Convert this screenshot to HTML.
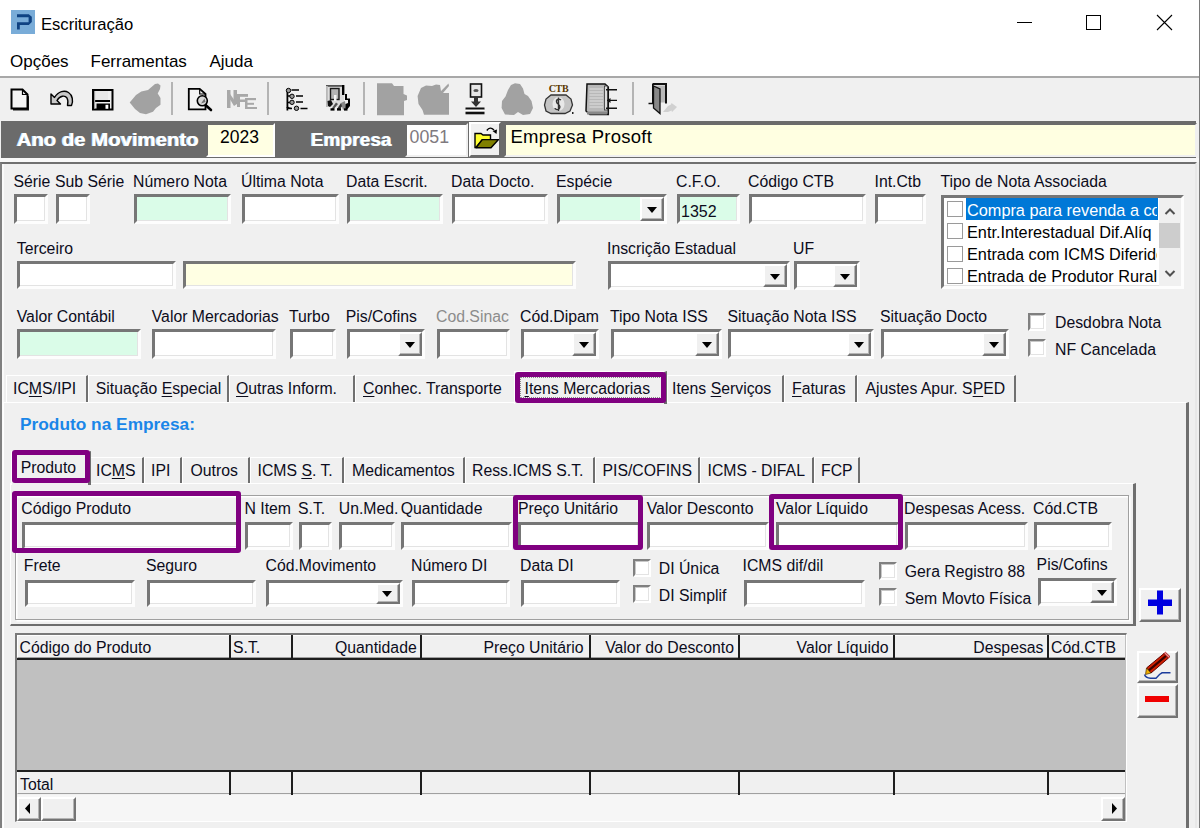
<!DOCTYPE html><html><head><meta charset="utf-8"><style>
*{margin:0;padding:0;box-sizing:border-box}
html,body{width:1200px;height:828px;overflow:hidden;background:#f0f0f0;position:relative;font-family:"Liberation Sans",sans-serif;color:#000}
div{position:absolute}
.l{font-size:15.8px;line-height:15.8px;white-space:pre;color:#0c0c1c}
.bx{border-style:solid;border-width:3px;border-color:#767676 #fdfdfd #fdfdfd #767676;box-shadow:inset -1px -1px 0 #e3e3e3}
.btn{background:#f0f0f0;border-style:solid;border-width:2px;border-color:#fff #747474 #747474 #fff;box-shadow:inset -1px -1px 0 #b4b4b4}
.arr{position:absolute;left:50%;top:50%;margin-left:-5.5px;margin-top:-2px;width:0;height:0;border-left:5.5px solid transparent;border-right:5.5px solid transparent;border-top:6px solid #000}
.pur{border:5px solid #800080;border-radius:3px}
.ck{background:#fff;border-style:solid;border-width:2px;border-color:#808080 #fff #fff #808080;box-shadow:inset -1px -1px 0 #e3e3e3, inset 1px 1px 0 #c8c8c8}
.u{text-decoration:underline;text-underline-offset:2px}
</style></head><body>
<div style="left:0;top:0;width:1200px;height:76px;background:#fff"></div>
<div style="left:0;top:76px;width:1200px;height:1.5px;background:#a8a8a8"></div>
<div style="left:11px;top:10px;width:24px;height:24px;background:#79acd8"></div>
<svg style="position:absolute;left:11px;top:10px" width="24" height="24"><path d="M6 4.3 H17.8 L20.8 6.8 V11.9 L17.8 14.9 H8.8 V19.6 H6 V12.2 H17.6 V7.3 H6 Z" fill="#0f4282"/></svg>
<div style="left:41px;top:16px;font-size:16.6px;line-height:17px;white-space:pre;color:#000">Escrituração</div>
<div style="left:1017px;top:22px;width:15px;height:1.2px;background:#000"></div>
<div style="left:1086px;top:15px;width:15px;height:15px;border:1.2px solid #000"></div>
<svg style="position:absolute;left:1156px;top:14px" width="17" height="17"><path d="M1 1 L16 16 M16 1 L1 16" stroke="#000" stroke-width="1.1"/></svg>
<div style="left:1199px;top:0;width:1px;height:828px;background:#7a7a7a"></div>
<div style="left:10px;top:52.6px;font-size:17px;line-height:17px;white-space:pre;color:#000">Opções</div>
<div style="left:90.5px;top:52.6px;font-size:17px;line-height:17px;white-space:pre;color:#000">Ferramentas</div>
<div style="left:209.5px;top:52.6px;font-size:17px;line-height:17px;white-space:pre;color:#000">Ajuda</div>
<div style="left:171px;top:82px;width:2px;height:33px;background:#b4b4b4"></div>
<div style="left:267px;top:82px;width:2px;height:33px;background:#b4b4b4"></div>
<div style="left:363px;top:82px;width:2px;height:33px;background:#b4b4b4"></div>
<div style="left:631.5px;top:82px;width:2px;height:33px;background:#b4b4b4"></div>
<svg style="position:absolute;left:0;top:0" width="700" height="120" viewBox="0 0 700 120">
<!-- new doc -->
<path d="M13 91 H23 L29 96.5 V110.5 H13 Z" fill="#1a1a1a"/>
<path d="M11.5 89.5 H22.5 L27.5 94.5 V108.5 H11.5 Z" fill="#f4f4f4" stroke="#000" stroke-width="2"/>
<path d="M22.5 89.5 V94.5 H27.5" fill="none" stroke="#000" stroke-width="1.2"/>
<!-- undo -->
<path d="M51 94 L51 104 L60.5 104 L57 100.5 C60 95.5 65 95 67 98 C68.5 100.5 68 103 67.5 105.5 L71.5 105.5 C73.5 101 72.5 95 68.5 92.5 C64.5 90 58.5 91 54.5 97.5 Z" fill="#c8c8c8" stroke="#000" stroke-width="1.4" stroke-linejoin="round"/>
<!-- save -->
<rect x="93" y="90" width="19.5" height="19.5" fill="#f0f0f0" stroke="#000" stroke-width="2"/>
<rect x="96" y="91" width="12" height="9" fill="#e8e8e8"/>
<rect x="95" y="100" width="15" height="2" fill="#000"/>
<rect x="96.5" y="103.5" width="13.5" height="6" fill="#000"/>
<rect x="105.5" y="104.8" width="2.8" height="4" fill="#fff"/>
<rect x="94" y="91" width="1.2" height="17" fill="#9a9a9a"/>
<!-- grey hand -->
<path d="M129.7 102.5 L136 95 L141.3 91.4 L148 90 L155 84 L158 83.5 L160.5 85.5 L160 89 L157.7 93.5 L160.5 98 L160.5 104.8 L156 108 L153 111.8 L146 114.2 L140 113 L135 109 Z" fill="#a2a2a2"/>
<!-- preview doc -->
<path d="M188.8 88.8 H199.7 L205.5 94 V109.3 H188.8 Z" fill="#f4f4f4" stroke="#000" stroke-width="1.8"/>
<path d="M199.7 89 V94 H205.5" fill="none" stroke="#000" stroke-width="1.2"/>
<path d="M205.5 105 L211 110" stroke="#000" stroke-width="2.6" stroke-linecap="round"/>
<circle cx="202.3" cy="100.8" r="5" fill="#d8d8d8" stroke="#000" stroke-width="1.6"/>
<path d="M201 103.5 L204.5 98.5 L205.5 102 Z" fill="#707070"/>
<!-- NFE grey -->
<g fill="#a8a8a8">
<rect x="227" y="90" width="3.5" height="18"/><rect x="233.5" y="90" width="3.5" height="14"/><path d="M228 91 L237 104 L234 106 L228 96 Z"/>
<rect x="237" y="95" width="3" height="12"/><rect x="237" y="94" width="11" height="2.8"/><rect x="237" y="99.5" width="8" height="2.5"/>
<rect x="245" y="98" width="2.5" height="11"/><rect x="245" y="98" width="11" height="2.2"/><rect x="245" y="102.8" width="9" height="2"/><rect x="245" y="107" width="12" height="2"/>
</g>
<!-- tree list -->
<g>
<rect x="286.5" y="89" width="1.8" height="21.5" fill="#000"/>
<path d="M287 96 H290 M287 102.5 H290 M287 107 Q288 108.5 292 108.5" stroke="#000" stroke-width="1.6" fill="none"/>
<circle cx="288.5" cy="90.5" r="2.2" fill="#9a9a9a" stroke="#000" stroke-width="1"/>
<circle cx="292" cy="96.3" r="2.2" fill="#9a9a9a" stroke="#000" stroke-width="1"/>
<circle cx="292" cy="102.3" r="2.2" fill="#9a9a9a" stroke="#000" stroke-width="1"/>
<circle cx="296.5" cy="108.3" r="2.2" fill="#9a9a9a" stroke="#000" stroke-width="1"/>
<path d="M291.5 90 H299 M296 96 H303 M296 102 H303 M300.5 108.5 H307.5" stroke="#000" stroke-width="1.7"/>
</g>
<!-- gear doc -->
<rect x="326" y="85" width="18" height="22" fill="#dcdcdc"/>
<rect x="326" y="85" width="18" height="1.8" fill="#555"/>
<rect x="342" y="85" width="2.4" height="10" fill="#000"/>
<rect x="326" y="86" width="1.8" height="21" fill="#b8b8b8"/>
<rect x="330.5" y="88.5" width="8.5" height="11" fill="#b4b4b4" stroke="#1a1a1a" stroke-width="1.4"/>
<rect x="334" y="95" width="2.5" height="6" fill="#f4f4f4"/>
<path d="M327.5 101 L331 100 L333 104 L330 107 L328 106 Z" fill="#111"/>
<path d="M331 109.5 L336 102.5 L338 104 L333 110 Z" fill="#555"/>
<path d="M337 109 L341 103 L343.5 104 L339.5 110 Z" fill="#333"/>
<path d="M341 103 L345 101 L346 108 L343 110 Z" fill="#888"/>
<rect x="330.5" y="108.3" width="4" height="2.3" fill="#000"/>
<rect x="337" y="108.3" width="4" height="2.3" fill="#000"/>
<rect x="344" y="108.3" width="3.5" height="2.3" fill="#000"/>
<path d="M345 94 H347 V98.5 H350 V106 L347.5 109 H345.5 V104 L348 103 V100 H345 Z" fill="#000"/>
<!-- separators drawn elsewhere -->
<!-- grey doc -->
<path d="M377 83.3 H392 L394 86 H403.5 V94 L407 95.5 V100 L404 101 V115.3 H377 Z" fill="#a2a2a2"/>
<!-- grey apple -->
<path d="M421 88 L426 85.5 L432 86 L436 84.5 L440 85 L441 91 L448.5 83.5 L449 86 L443 93 L449 93 V114.8 H424 L422.5 110 L418.5 104 L417.6 96 Z" fill="#a2a2a2"/>
<!-- download -->
<rect x="470.5" y="84" width="11" height="13" fill="#e6e6e6" stroke="#111" stroke-width="1.6"/>
<ellipse cx="476" cy="90.5" rx="2.6" ry="1.6" fill="#555"/>
<path d="M474 97 H478 V101.5 H481 L476 107 L471 101.5 H474 Z" fill="#333"/>
<rect x="465.5" y="107.5" width="19" height="2.2" fill="#111"/>
<rect x="465.5" y="109.7" width="19" height="2" fill="#fff"/>
<rect x="465.5" y="111.7" width="19" height="2.6" fill="#111"/>
<!-- grey tree -->
<path d="M515 83.3 L520 84 L523 88.5 L524.5 94 L528 96 L531.5 101 L533 108 L530 114 L523 115 L518 112 L514 115 L505 114.5 L501.6 108 L502 101 L505.5 96.5 L508 90 L511 85 Z" fill="#a2a2a2"/>
<!-- CTB bag -->
<text x="558.5" y="91.5" font-family="Liberation Serif" font-weight="bold" font-size="10" fill="#5a3800" text-anchor="middle" letter-spacing="-0.3">CTB</text>
<path d="M551 95 H566 L571 99 L572.5 105 L570 111 L565 113.5 H551 L546 111 L544.5 105 L546 99 Z" fill="#c4c4c4" stroke="#333" stroke-width="1.3"/>
<ellipse cx="558.5" cy="104" rx="6" ry="7" fill="#e8e8e8"/>
<path d="M561 100 C558 98 555.5 100 557 103 C559 105 561.5 106 559 109 C557 110.5 555 109 555 108 M558.5 97.5 V111" fill="none" stroke="#333" stroke-width="1.4"/>
<rect x="572" y="112" width="1.5" height="2" fill="#222"/>
<!-- book -->
<path d="M587 84 H605 L608.3 87 V114.5 H590 L586 111 Z" fill="#b8b8b8" stroke="#111" stroke-width="1.5"/>
<path d="M589.5 89 H603 M589.5 92 H603 M589.5 95 H603 M589.5 98 H603 M589.5 101 H603 M589.5 104 H603 M589.5 107 H603" stroke="#e0e0e0" stroke-width="1"/>
<rect x="604.5" y="86" width="3" height="24" fill="#dcdcdc" stroke="#333" stroke-width="0.8"/>
<path d="M606 89.8 H617 M607 100.4 H617 M606 108.2 H617" stroke="#111" stroke-width="1.4"/>
<path d="M607 100.4 L610.5 98 V103 Z" fill="#111"/>
<rect x="587" y="111.5" width="20" height="3" fill="#888"/>
<!-- door -->
<path d="M652.5 84 H666 V103.5" fill="none" stroke="#111" stroke-width="2"/>
<rect x="652" y="84" width="1.6" height="20" fill="#111"/>
<rect x="654" y="85.5" width="11" height="17" fill="#b8b8b8"/>
<path d="M648.5 103.5 H654" stroke="#111" stroke-width="1.5"/>
<path d="M653.5 86 L660 89 V113.5 L653.5 108 Z" fill="#888" stroke="#111" stroke-width="1.3"/>
<path d="M663 112 L668 106 L671 104.5 L671.5 103 L677 107 L672 112 L671.5 110.5 L668 112 Z" fill="#d0d0d0"/>
</svg>
<div style="left:1px;top:120.5px;width:1195px;height:37.5px;background:#6b6b6b"></div>
<div style="left:0;top:158px;width:1199px;height:4.3px;background:#f8f8f8"></div>
<div class="bold3d" style="left:17px;top:130.2px;font-size:19px;line-height:19px;font-weight:bold;transform:scaleX(1.07);transform-origin:0 0;white-space:pre;color:#fff;text-shadow:-1px -0.5px 0 #c9e6ff">Ano de Movimento</div>
<div style="left:311px;top:130.2px;font-size:19px;line-height:19px;font-weight:bold;letter-spacing:0.1px;white-space:pre;color:#fff;text-shadow:-1px -0.5px 0 #c9e6ff">Empresa</div>
<div style="left:206px;top:122.5px;width:69px;height:34px;background:#ffffe3;border-style:solid;border-width:2px;border-color:#6b6b6b #fff #fff #6b6b6b"></div>
<div style="left:220px;top:129.0px;font-size:17.5px;line-height:17.5px;color:#000">2023</div>
<div style="left:405px;top:122.5px;width:63px;height:34px;background:#fff;border-style:solid;border-width:2px;border-color:#6b6b6b #f0f0f0 #f0f0f0 #6b6b6b"></div>
<div style="left:409.5px;top:129.3px;font-size:17.8px;line-height:17.8px;color:#7f7a80">0051</div>
<div style="left:469px;top:122px;width:32px;height:35px;background:#f0f0f0;border-style:solid;border-width:2px;border-color:#fff #6a6a6a #6a6a6a #fff"></div>
<svg style="position:absolute;left:465px;top:118px" width="45" height="42" viewBox="465 118 45 42">
<path d="M475 133.5 H481 L483 135 H490.5 V140 H482 L476 147.5 H475 Z" fill="#ffff30" stroke="#000" stroke-width="1.4"/>
<path d="M476 147.7 H491 L498.5 139.6 H482.3 Z" fill="#808000" stroke="#000" stroke-width="1.4" stroke-linejoin="round"/>
<path d="M486.8 130.5 Q490 126 494 130" fill="none" stroke="#000" stroke-width="1.4"/>
<path d="M492.5 131 L497 129.5 L496.5 134 Z" fill="#000"/>
</svg>
<div style="left:503.5px;top:122.5px;width:693px;height:34px;background:#ffffe1;border-style:solid;border-width:2px;border-color:#6b6b6b #f0f0f0 #f0f0f0 #6b6b6b"></div>
<div style="left:510.5px;top:127.9px;font-size:18.5px;line-height:18.5px;letter-spacing:0.25px;white-space:pre;color:#000">Empresa Prosoft</div>
<div style="left:0;top:162.3px;width:1197px;height:680px;border-style:solid;border-width:2.2px 2px 0 2px;border-color:#707070 #e8e8e8 #e8e8e8 #808080;box-shadow:inset 2px 0 0 #fafafa"></div>
<div class="l " style="left:13.5px;top:174.2px;">Série</div>
<div class="l " style="left:55px;top:174.2px;">Sub Série</div>
<div class="l " style="left:133px;top:174.2px;">Número Nota</div>
<div class="l " style="left:241px;top:174.2px;">Última Nota</div>
<div class="l " style="left:346px;top:174.2px;">Data Escrit.</div>
<div class="l " style="left:451px;top:174.2px;">Data Docto.</div>
<div class="l " style="left:556px;top:174.2px;">Espécie</div>
<div class="l " style="left:676px;top:174.2px;">C.F.O.</div>
<div class="l " style="left:748px;top:174.2px;">Código CTB</div>
<div class="l " style="left:874.5px;top:174.2px;">Int.Ctb</div>
<div class="l " style="left:940.5px;top:174.2px;">Tipo de Nota Associada</div>
<div class="bx" style="left:14px;top:194px;width:34px;height:30px;background:#fff;"></div>
<div class="bx" style="left:56px;top:194px;width:34px;height:30px;background:#fff;"></div>
<div class="bx" style="left:134px;top:194px;width:97px;height:30px;background:#dafce8;"></div>
<div class="bx" style="left:242px;top:194px;width:97px;height:30px;background:#fff;"></div>
<div class="bx" style="left:347px;top:194px;width:96px;height:30px;background:#dafce8;"></div>
<div class="bx" style="left:452px;top:194px;width:96px;height:30px;background:#fff;"></div>
<div class="bx" style="left:557px;top:194px;width:110px;height:30px;background:#dafce8;"></div>
<div class="btn" style="left:640px;top:197px;width:24px;height:24px"><i class="arr"></i></div>
<div class="bx" style="left:677px;top:194px;width:63px;height:30px;background:#dafce8;"></div>
<div class="l " style="left:681px;top:203.5px;font-size:16px">1352</div>
<div class="bx" style="left:749px;top:194px;width:117px;height:30px;background:#fff;"></div>
<div class="bx" style="left:875px;top:194px;width:51px;height:30px;background:#fff;"></div>
<div style="left:941px;top:194.5px;width:243px;height:94px;background:#fff;border-style:solid;border-width:3px;border-color:#767676 #fdfdfd #fdfdfd #767676;box-shadow:inset -1px -1px 0 #e3e3e3"></div>
<div style="left:965.5px;top:197.5px;width:192px;height:22px;background:#0078d7"></div>
<div style="left:947px;top:201.0px;width:16px;height:16px;background:#fff;border:1.3px solid #9a9a9a"></div>
<div style="left:967px;top:200.5px;width:190px;height:20px;overflow:hidden;font-size:16.3px;line-height:18px;white-space:pre;color:#fff">Compra para revenda a co</div>
<div style="left:947px;top:223.3px;width:16px;height:16px;background:#fff;border:1.3px solid #9a9a9a"></div>
<div style="left:967px;top:222.8px;width:190px;height:20px;overflow:hidden;font-size:16.3px;line-height:18px;white-space:pre;color:#000">Entr.Interestadual Dif.Alíq</div>
<div style="left:947px;top:245.6px;width:16px;height:16px;background:#fff;border:1.3px solid #9a9a9a"></div>
<div style="left:967px;top:245.1px;width:190px;height:20px;overflow:hidden;font-size:16.3px;line-height:18px;white-space:pre;color:#000">Entrada com ICMS Diferido</div>
<div style="left:947px;top:267.9px;width:16px;height:16px;background:#fff;border:1.3px solid #9a9a9a"></div>
<div style="left:967px;top:267.4px;width:190px;height:20px;overflow:hidden;font-size:16.3px;line-height:18px;white-space:pre;color:#000">Entrada de Produtor Rural</div>
<div style="left:1158.5px;top:197.5px;width:22.5px;height:88px;background:#f0f0f0"></div>
<div style="left:1159px;top:223px;width:21px;height:25px;background:#cdcdcd"></div>
<svg style="position:absolute;left:1158px;top:200px" width="24" height="86"><path d="M7.5 14 L12 9.5 L16.5 14" fill="none" stroke="#505050" stroke-width="2"/><path d="M7.5 71 L12 75.5 L16.5 71" fill="none" stroke="#505050" stroke-width="2"/></svg>
<div class="l " style="left:16.75px;top:240.5px;">Terceiro</div>
<div class="l " style="left:607px;top:240.5px;">Inscrição Estadual</div>
<div class="l " style="left:793px;top:240.5px;">UF</div>
<div class="bx" style="left:17px;top:261px;width:159px;height:28px;background:#fff;"></div>
<div class="bx" style="left:183px;top:261px;width:393px;height:28px;background:#ffffe3;"></div>
<div class="bx" style="left:608px;top:261px;width:182px;height:29px;background:#fff;"></div>
<div class="btn" style="left:763px;top:264px;width:24px;height:23px"><i class="arr"></i></div>
<div class="bx" style="left:794px;top:261px;width:66px;height:29px;background:#fff;"></div>
<div class="btn" style="left:833px;top:264px;width:24px;height:23px"><i class="arr"></i></div>
<div class="l " style="left:16.75px;top:308.7px;">Valor Contábil</div>
<div class="l " style="left:151.75px;top:308.7px;">Valor Mercadorias</div>
<div class="l " style="left:289px;top:308.7px;">Turbo</div>
<div class="l " style="left:345.75px;top:308.7px;">Pis/Cofins</div>
<div class="l " style="left:520px;top:308.7px;">Cód.Dipam</div>
<div class="l " style="left:610px;top:308.7px;">Tipo Nota ISS</div>
<div class="l " style="left:727.5px;top:308.7px;">Situação Nota ISS</div>
<div class="l " style="left:880px;top:308.7px;">Situação Docto</div>
<div class="l " style="left:436px;top:308.7px;color:#8c8c8c">Cod.Sinac</div>
<div class="bx" style="left:17px;top:329px;width:124px;height:30px;background:#dafce8;"></div>
<div class="bx" style="left:152px;top:329px;width:124px;height:30px;background:#fff;"></div>
<div class="bx" style="left:290px;top:329px;width:46px;height:30px;background:#fff;"></div>
<div class="bx" style="left:347px;top:329px;width:78px;height:30px;background:#fff;"></div>
<div class="btn" style="left:398px;top:332px;width:24px;height:24px"><i class="arr"></i></div>
<div class="bx" style="left:437px;top:329px;width:73px;height:30px;background:#fff;"></div>
<div class="bx" style="left:521px;top:329px;width:78px;height:30px;background:#fff;"></div>
<div class="btn" style="left:572px;top:332px;width:24px;height:24px"><i class="arr"></i></div>
<div class="bx" style="left:611px;top:329px;width:111px;height:30px;background:#fff;"></div>
<div class="btn" style="left:695px;top:332px;width:24px;height:24px"><i class="arr"></i></div>
<div class="bx" style="left:728px;top:329px;width:146px;height:30px;background:#fff;"></div>
<div class="btn" style="left:847px;top:332px;width:24px;height:24px"><i class="arr"></i></div>
<div class="bx" style="left:881px;top:329px;width:128px;height:30px;background:#fff;"></div>
<div class="btn" style="left:982px;top:332px;width:24px;height:24px"><i class="arr"></i></div>
<div class="ck" style="left:1028px;top:313px;width:18px;height:18px"></div>
<div class="l " style="left:1055px;top:314.5px;">Desdobra Nota</div>
<div class="ck" style="left:1028px;top:339px;width:18px;height:18px"></div>
<div class="l " style="left:1055px;top:341.5px;">NF Cancelada</div>
<div style="left:3px;top:401.5px;width:1185.5px;height:440px;border-style:solid;border-width:1.5px 3px 0 1.5px;border-color:#fff #6e6e6e #6e6e6e #fff"></div>
<div style="left:6px;top:374.5px;width:81.5px;height:27px;background:#f0f0f0;border-style:solid;border-width:1.5px 2.6px 0 1.5px;border-color:#fff #707070 #707070 #fff"></div>
<div class="l " style="left:13px;top:381.3px;">IC<span class="u">M</span>S/IPI</div>
<div style="left:87.5px;top:374.5px;width:141.0px;height:27px;background:#f0f0f0;border-style:solid;border-width:1.5px 2.6px 0 1.5px;border-color:#fff #707070 #707070 #fff"></div>
<div class="l " style="left:95.75px;top:381.3px;">Situação <span class="u">E</span>special</div>
<div style="left:228.5px;top:374.5px;width:126.0px;height:27px;background:#f0f0f0;border-style:solid;border-width:1.5px 2.6px 0 1.5px;border-color:#fff #707070 #707070 #fff"></div>
<div class="l " style="left:236px;top:381.3px;"><span class="u">O</span>utras Inform.</div>
<div style="left:354.5px;top:374.5px;width:159.5px;height:27px;background:#f0f0f0;border-style:solid;border-width:1.5px 0px 0 1.5px;border-color:#fff #707070 #707070 #fff"></div>
<div class="l " style="left:363px;top:381.3px;"><span class="u">C</span>onhec. Transporte</div>
<div style="left:667px;top:374.5px;width:117px;height:27px;background:#f0f0f0;border-style:solid;border-width:1.5px 2.6px 0 1.5px;border-color:#fff #707070 #707070 #fff"></div>
<div class="l " style="left:672px;top:381.3px;">Itens <span class="u">S</span>erviços</div>
<div style="left:784px;top:374.5px;width:73px;height:27px;background:#f0f0f0;border-style:solid;border-width:1.5px 2.6px 0 1.5px;border-color:#fff #707070 #707070 #fff"></div>
<div class="l " style="left:792px;top:381.3px;"><span class="u">F</span>aturas</div>
<div style="left:857px;top:374.5px;width:159px;height:27px;background:#f0f0f0;border-style:solid;border-width:1.5px 2.6px 0 1.5px;border-color:#fff #707070 #707070 #fff"></div>
<div class="l " style="left:865.5px;top:381.3px;">Ajustes Apur. S<span class="u">P</span>ED</div>
<div style="left:514px;top:371px;width:153px;height:33px;background:#f0f0f0;border-style:solid;border-width:1.5px 3px 0 1.5px;border-color:#fff #6e6e6e #6e6e6e #fff"></div>
<div class="l " style="left:524.5px;top:381.3px;"><span class="u">I</span>tens Mercadorias</div>
<div style="left:520px;top:376.5px;width:142px;height:21.5px;border:1px dotted #8a8a8a"></div>
<div class="pur" style="left:515px;top:372px;width:151px;height:31px"></div>
<div style="left:20px;top:416.6px;font-size:15.8px;line-height:15.8px;font-weight:bold;transform:scaleX(1.095);transform-origin:0 0;white-space:pre;color:#1a86e8">Produto na Empresa:</div>
<div style="left:9.5px;top:483px;width:1126px;height:143px;border-style:solid;border-width:1.5px 3px 2.5px 1.5px;border-color:#fff #6e6e6e #6e6e6e #fff"></div>
<div style="left:90px;top:456.5px;width:54px;height:26.5px;background:#f0f0f0;border-style:solid;border-width:1.5px 2.6px 0 1.5px;border-color:#fff #6e6e6e #6e6e6e #fff"></div>
<div class="l " style="left:96px;top:462.8px;">IC<span class="u">M</span>S</div>
<div style="left:144px;top:456.5px;width:38px;height:26.5px;background:#f0f0f0;border-style:solid;border-width:1.5px 2.6px 0 1.5px;border-color:#fff #6e6e6e #6e6e6e #fff"></div>
<div class="l " style="left:151px;top:462.8px;">IPI</div>
<div style="left:182px;top:456.5px;width:67.5px;height:26.5px;background:#f0f0f0;border-style:solid;border-width:1.5px 2.6px 0 1.5px;border-color:#fff #6e6e6e #6e6e6e #fff"></div>
<div class="l " style="left:190.5px;top:462.8px;">Outros</div>
<div style="left:249.5px;top:456.5px;width:94.5px;height:26.5px;background:#f0f0f0;border-style:solid;border-width:1.5px 2.6px 0 1.5px;border-color:#fff #6e6e6e #6e6e6e #fff"></div>
<div class="l " style="left:257.5px;top:462.8px;">ICMS <span class="u">S</span>. T.</div>
<div style="left:344px;top:456.5px;width:120.5px;height:26.5px;background:#f0f0f0;border-style:solid;border-width:1.5px 2.6px 0 1.5px;border-color:#fff #6e6e6e #6e6e6e #fff"></div>
<div class="l " style="left:352px;top:462.8px;">Medicamentos</div>
<div style="left:464.5px;top:456.5px;width:130.0px;height:26.5px;background:#f0f0f0;border-style:solid;border-width:1.5px 2.6px 0 1.5px;border-color:#fff #6e6e6e #6e6e6e #fff"></div>
<div class="l " style="left:472px;top:462.8px;">Ress.ICMS S.T.</div>
<div style="left:594.5px;top:456.5px;width:105.0px;height:26.5px;background:#f0f0f0;border-style:solid;border-width:1.5px 2.6px 0 1.5px;border-color:#fff #6e6e6e #6e6e6e #fff"></div>
<div class="l " style="left:602.5px;top:462.8px;">PIS/COFINS</div>
<div style="left:699.5px;top:456.5px;width:114.0px;height:26.5px;background:#f0f0f0;border-style:solid;border-width:1.5px 2.6px 0 1.5px;border-color:#fff #6e6e6e #6e6e6e #fff"></div>
<div class="l " style="left:707.5px;top:462.8px;">ICMS - DIFAL</div>
<div style="left:813.5px;top:456.5px;width:46.5px;height:26.5px;background:#f0f0f0;border-style:solid;border-width:1.5px 2.6px 0 1.5px;border-color:#fff #6e6e6e #6e6e6e #fff"></div>
<div class="l " style="left:821px;top:462.8px;">FCP</div>
<div style="left:11px;top:451px;width:80px;height:34px;background:#f0f0f0;border-style:solid;border-width:1.5px 3px 0 1.5px;border-color:#fff #6e6e6e #6e6e6e #fff"></div>
<div class="l " style="left:20.75px;top:460.0px;">Produto</div>
<div class="pur" style="left:11.5px;top:449.5px;width:78.5px;height:33.0px"></div>
<div style="left:15px;top:494.5px;width:1114px;height:125px;border:1.5px solid #a0a0a0;box-shadow:1.5px 1.5px 0 #fff, inset 1.5px 1.5px 0 #fff"></div>
<div class="l " style="left:21.25px;top:500.5px;">Código Produto</div>
<div class="l " style="left:244.5px;top:500.5px;">N Item</div>
<div class="l " style="left:298px;top:500.5px;">S.T.</div>
<div class="l " style="left:338.75px;top:500.5px;">Un.Med.</div>
<div class="l " style="left:400.75px;top:500.5px;">Quantidade</div>
<div class="l " style="left:518px;top:500.5px;">Preço Unitário</div>
<div class="l " style="left:646.75px;top:500.5px;">Valor Desconto</div>
<div class="l " style="left:776px;top:500.5px;">Valor Líquido</div>
<div class="l " style="left:904px;top:500.5px;">Despesas Acess.</div>
<div class="l " style="left:1033px;top:500.5px;">Cód.CTB</div>
<div class="bx" style="left:22px;top:522px;width:218px;height:28px;background:#fff;"></div>
<div class="bx" style="left:245px;top:522px;width:48px;height:28px;background:#fff;"></div>
<div class="bx" style="left:299px;top:522px;width:33px;height:28px;background:#fff;"></div>
<div class="bx" style="left:339px;top:522px;width:56px;height:28px;background:#fff;"></div>
<div class="bx" style="left:401px;top:522px;width:111px;height:28px;background:#fff;"></div>
<div class="bx" style="left:518px;top:522px;width:123px;height:28px;background:#fff;"></div>
<div class="bx" style="left:647px;top:522px;width:122px;height:28px;background:#fff;"></div>
<div class="bx" style="left:776px;top:522px;width:124px;height:28px;background:#fff;"></div>
<div class="bx" style="left:905px;top:522px;width:123px;height:28px;background:#fff;"></div>
<div class="bx" style="left:1034px;top:522px;width:78px;height:28px;background:#fff;"></div>
<div class="pur" style="left:11.5px;top:491px;width:229.5px;height:61.5px"></div>
<div class="pur" style="left:513px;top:494.5px;width:129.5px;height:55.0px"></div>
<div class="pur" style="left:769px;top:493.5px;width:133.5px;height:56.0px"></div>
<div class="l " style="left:23.75px;top:557.5px;">Frete</div>
<div class="l " style="left:146px;top:557.5px;">Seguro</div>
<div class="l " style="left:265.5px;top:557.5px;">Cód.Movimento</div>
<div class="l " style="left:411px;top:557.5px;">Número DI</div>
<div class="l " style="left:520px;top:557.5px;">Data DI</div>
<div class="l " style="left:742.5px;top:557.5px;">ICMS dif/dil</div>
<div class="l " style="left:1036.6px;top:556.5px;">Pis/Cofins</div>
<div class="bx" style="left:25px;top:579.5px;width:110px;height:27.5px;background:#fff;"></div>
<div class="bx" style="left:147px;top:579.5px;width:109px;height:27.5px;background:#fff;"></div>
<div class="bx" style="left:266px;top:579.5px;width:136.5px;height:27.5px;background:#fff;"></div>
<div class="btn" style="left:375.5px;top:582.5px;width:24px;height:21.5px"><i class="arr"></i></div>
<div class="bx" style="left:412px;top:579.5px;width:98px;height:27.5px;background:#fff;"></div>
<div class="bx" style="left:521px;top:579.5px;width:98.5px;height:27.5px;background:#fff;"></div>
<div class="bx" style="left:744px;top:579.5px;width:121px;height:27.5px;background:#fff;"></div>
<div class="bx" style="left:1038px;top:578px;width:79px;height:27.5px;background:#fff;"></div>
<div class="btn" style="left:1090px;top:581px;width:24px;height:21.5px"><i class="arr"></i></div>
<div class="ck" style="left:632.5px;top:558.5px;width:18px;height:18px"></div>
<div class="l " style="left:658.75px;top:560.5px;">DI Única</div>
<div class="ck" style="left:632.5px;top:585px;width:18px;height:18px"></div>
<div class="l " style="left:658.75px;top:587.5px;">DI Simplif</div>
<div class="ck" style="left:878.5px;top:561.5px;width:18px;height:18px"></div>
<div class="l " style="left:904.8px;top:563.5px;">Gera Registro 88</div>
<div class="ck" style="left:878.5px;top:588px;width:18px;height:18px"></div>
<div class="l " style="left:904.8px;top:590.5px;">Sem Movto Física</div>
<div style="left:14.5px;top:632.5px;width:1112px;height:189.5px;background:#c0c0c0;border-style:solid;border-width:2.5px 1.5px 1.5px 2.5px;border-color:#7a7a7a #fff #fff #7a7a7a"></div>
<div style="left:17px;top:635px;width:1108px;height:24.5px;background:#f0f0f0"></div>
<div style="left:17px;top:771px;width:1108px;height:24.5px;background:#f0f0f0"></div>
<div style="left:17px;top:635px;width:213px;height:23px;border-top:1px solid #fff;border-left:1px solid #fff;border-bottom:1.5px solid #a0a0a0"></div>
<div style="left:17px;top:771px;width:213px;height:23px;border-top:1px solid #fff;border-left:1px solid #fff;border-bottom:1.5px solid #a0a0a0"></div>
<div style="left:230px;top:635px;width:62px;height:23px;border-top:1px solid #fff;border-left:1px solid #fff;border-bottom:1.5px solid #a0a0a0"></div>
<div style="left:230px;top:771px;width:62px;height:23px;border-top:1px solid #fff;border-left:1px solid #fff;border-bottom:1.5px solid #a0a0a0"></div>
<div style="left:292px;top:635px;width:129px;height:23px;border-top:1px solid #fff;border-left:1px solid #fff;border-bottom:1.5px solid #a0a0a0"></div>
<div style="left:292px;top:771px;width:129px;height:23px;border-top:1px solid #fff;border-left:1px solid #fff;border-bottom:1.5px solid #a0a0a0"></div>
<div style="left:421px;top:635px;width:168.5px;height:23px;border-top:1px solid #fff;border-left:1px solid #fff;border-bottom:1.5px solid #a0a0a0"></div>
<div style="left:421px;top:771px;width:168.5px;height:23px;border-top:1px solid #fff;border-left:1px solid #fff;border-bottom:1.5px solid #a0a0a0"></div>
<div style="left:589.5px;top:635px;width:149.0px;height:23px;border-top:1px solid #fff;border-left:1px solid #fff;border-bottom:1.5px solid #a0a0a0"></div>
<div style="left:589.5px;top:771px;width:149.0px;height:23px;border-top:1px solid #fff;border-left:1px solid #fff;border-bottom:1.5px solid #a0a0a0"></div>
<div style="left:738.5px;top:635px;width:155.0px;height:23px;border-top:1px solid #fff;border-left:1px solid #fff;border-bottom:1.5px solid #a0a0a0"></div>
<div style="left:738.5px;top:771px;width:155.0px;height:23px;border-top:1px solid #fff;border-left:1px solid #fff;border-bottom:1.5px solid #a0a0a0"></div>
<div style="left:893.5px;top:635px;width:154.0px;height:23px;border-top:1px solid #fff;border-left:1px solid #fff;border-bottom:1.5px solid #a0a0a0"></div>
<div style="left:893.5px;top:771px;width:154.0px;height:23px;border-top:1px solid #fff;border-left:1px solid #fff;border-bottom:1.5px solid #a0a0a0"></div>
<div style="left:1047.5px;top:635px;width:77.5px;height:23px;border-top:1px solid #fff;border-left:1px solid #fff;border-bottom:1.5px solid #a0a0a0"></div>
<div style="left:1047.5px;top:771px;width:77.5px;height:23px;border-top:1px solid #fff;border-left:1px solid #fff;border-bottom:1.5px solid #a0a0a0"></div>
<div style="left:229px;top:635px;width:2px;height:24px;background:#1e1e1e"></div>
<div style="left:229px;top:771px;width:2px;height:24px;background:#1e1e1e"></div>
<div style="left:291px;top:635px;width:2px;height:24px;background:#1e1e1e"></div>
<div style="left:291px;top:771px;width:2px;height:24px;background:#1e1e1e"></div>
<div style="left:420px;top:635px;width:2px;height:24px;background:#1e1e1e"></div>
<div style="left:420px;top:771px;width:2px;height:24px;background:#1e1e1e"></div>
<div style="left:588.5px;top:635px;width:2px;height:24px;background:#1e1e1e"></div>
<div style="left:588.5px;top:771px;width:2px;height:24px;background:#1e1e1e"></div>
<div style="left:737.5px;top:635px;width:2px;height:24px;background:#1e1e1e"></div>
<div style="left:737.5px;top:771px;width:2px;height:24px;background:#1e1e1e"></div>
<div style="left:892.5px;top:635px;width:2px;height:24px;background:#1e1e1e"></div>
<div style="left:892.5px;top:771px;width:2px;height:24px;background:#1e1e1e"></div>
<div style="left:1046.5px;top:635px;width:2px;height:24px;background:#1e1e1e"></div>
<div style="left:1046.5px;top:771px;width:2px;height:24px;background:#1e1e1e"></div>
<div style="left:17px;top:657.5px;width:1108px;height:2px;background:#1e1e1e"></div>
<div style="left:17px;top:770px;width:1108px;height:2px;background:#1e1e1e"></div>
<div class="l " style="left:19.5px;top:639.5px;">Código do Produto</div>
<div class="l " style="left:233px;top:639.5px;">S.T.</div>
<div class="l" style="right:783.3px;top:639.5px">Quantidade</div>
<div class="l" style="right:616.5px;top:639.5px">Preço Unitário</div>
<div class="l" style="right:466px;top:639.5px">Valor do Desconto</div>
<div class="l" style="right:311.5px;top:639.5px">Valor Líquido</div>
<div class="l" style="right:156.5px;top:639.5px">Despesas</div>
<div class="l " style="left:1051px;top:639.5px;">Cód.CTB</div>
<div class="l " style="left:20px;top:776.5px;">Total</div>
<div style="left:17px;top:795px;width:1108px;height:26px;background:#f6f6f6"></div>
<div class="btn" style="left:17px;top:796.5px;width:24px;height:24.5px"></div>
<svg style="position:absolute;left:17px;top:796px" width="24" height="25"><path d="M8 12.5 L13 7 V18 Z" fill="#000"/></svg>
<div class="btn" style="left:41px;top:796.5px;width:35px;height:24.5px"></div>
<div class="btn" style="left:1101px;top:796.5px;width:24px;height:24.5px"></div>
<svg style="position:absolute;left:1101px;top:796px" width="24" height="25"><path d="M16 12.5 L11 7 V18 Z" fill="#000"/></svg>
<div class="btn" style="left:1139px;top:587.5px;width:42px;height:34.5px"></div>
<svg style="position:absolute;left:1139px;top:587.5px" width="42" height="35"><path d="M9 11.5 H33 V18 H9 Z M18 2.5 H24 V26.5 H18 Z" fill="#0000e0"/></svg>
<div class="btn" style="left:1136.5px;top:651px;width:41px;height:32px"></div>
<svg style="position:absolute;left:1136.5px;top:651px" width="41" height="32"><path d="M9.5 17 L27 2.5 L31.5 7 L14 22 Z" fill="#d02000" stroke="#600000" stroke-width="1"/><path d="M11.8 19.3 L29 4.8" stroke="#3a0000" stroke-width="2.2"/><path d="M27 2.5 L28.5 1.3 L33 5.6 L31.5 7 Z" fill="#f09090" stroke="#a00000" stroke-width="0.8"/><path d="M9.5 17 L14 22 L8.5 23.5 Z" fill="#f0b000" stroke="#503000" stroke-width="0.7"/><path d="M7.5 23.5 Q8.5 27 13.5 27.2 L19 27.2 L22.5 23.5 L25 21.8 L33.5 21.8" fill="none" stroke="#1c3c9c" stroke-width="1.4"/></svg>
<div class="btn" style="left:1136.5px;top:683.5px;width:41px;height:34.5px"></div>
<div style="left:1145px;top:695.5px;width:24px;height:6px;background:#f00000"></div>
</body></html>
